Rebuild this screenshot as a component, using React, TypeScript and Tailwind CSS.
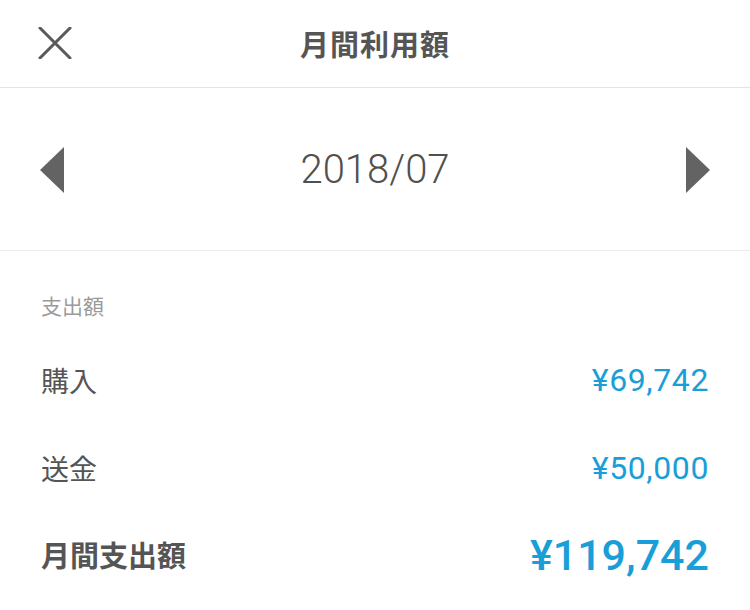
import React from "react";

const jp = { fontFamily: '"Noto Sans CJK JP", "Noto Sans", sans-serif' };
const num = { fontFamily: 'Roboto, "Liberation Sans", sans-serif' };

export default function App() {
  return (
    <div className="w-[750px] h-[610px] bg-white text-[#555555] overflow-hidden" style={jp}>
      <div className="relative h-[88px] border-b border-[#e3e3e3] flex items-center justify-center">
        <svg className="absolute left-[38px] top-[27px]" width="34" height="32" viewBox="0 0 34 32">
          <path d="M2 1 L32 31 M32 1 L2 31" stroke="#5a5a5a" strokeWidth="3" strokeLinecap="round" fill="none" />
        </svg>
        <span className="text-[29px] font-bold tracking-[1px] text-[#555]">月間利用額</span>
      </div>
      <div className="h-[163px] border-b border-[#ececec] flex items-center justify-between px-[40px] pt-[2px]">
        <svg width="24" height="48" viewBox="0 0 24 48">
          <path d="M24 1 L0 24 L24 47 Z" fill="#636363" />
        </svg>
        <span className="text-[40px] font-light text-[#505050]" style={num}>2018/07</span>
        <svg width="24" height="48" viewBox="0 0 24 48">
          <path d="M0 1 L24 24 L0 47 Z" fill="#636363" />
        </svg>
      </div>
      <div className="px-[41px]">
        <div className="h-[85px] pt-[39px]">
          <div className="text-[21px] leading-[30px] text-[#9a9a9a]">支出額</div>
        </div>
        <div className="h-[88px] flex items-center justify-between">
          <span className="text-[28px] text-[#555]">購入</span>
          <span className="text-[32px] tracking-[0.6px] text-[#1a9ed8]" style={num}>¥69,742</span>
        </div>
        <div className="h-[88px] flex items-center justify-between">
          <span className="text-[28px] text-[#555]">送金</span>
          <span className="text-[32px] tracking-[0.6px] text-[#1a9ed8]" style={num}>¥50,000</span>
        </div>
        <div className="h-[88px] flex items-center justify-between pb-[2px]">
          <span className="text-[29px] font-bold text-[#555]">月間支出額</span>
          <span className="text-[43px] font-medium text-[#1a9ed8]" style={num}>¥119,742</span>
        </div>
      </div>
    </div>
  );
}
